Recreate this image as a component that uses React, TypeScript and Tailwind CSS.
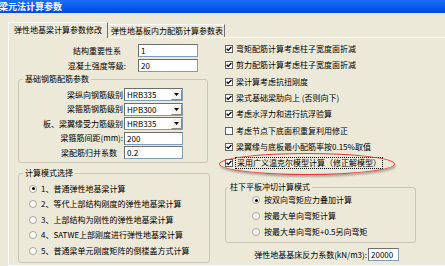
import React from 'react';

function TextBox({ value, className }: { value: string; className: string }) {
  return (
    <div className={`h-[13px] bg-white border border-[#7f9db9] border-t-[#6d6d6d] border-l-[#6d6d6d] pl-[2px] leading-[11px] ${className}`}>
      {value}
    </div>
  );
}

function Select({ value }: { value: string }) {
  return (
    <div className="h-[13px] w-[59px] bg-white border border-[#7f9db9] border-t-[#6d6d6d] border-l-[#6d6d6d] flex items-center">
      <span className="flex-1 pl-[2px] leading-[11px]">{value}</span>
      <span className="w-[11px] h-[11px] bg-[#f3f2ec] border border-t-white border-l-white border-r-[#8a8a8a] border-b-[#8a8a8a] flex items-center justify-center">
        <svg width="5" height="3" viewBox="0 0 5 3">
          <path d="M0 0H5L2.5 3Z" fill="#000" />
        </svg>
      </span>
    </div>
  );
}

function Check({ checked }: { checked: boolean }) {
  return (
    <span className="w-[8px] h-[8px] bg-white border border-[#5e5e5e] flex items-center justify-center shrink-0">
      {checked && (
        <svg width="6" height="6" viewBox="0 0 6 6">
          <path d="M0.6 2.8L2.2 4.4L5.4 1" stroke="#000" strokeWidth="1.3" fill="none" />
        </svg>
      )}
    </span>
  );
}

function Radio({ on }: { on: boolean }) {
  return (
    <span className="w-[8px] h-[8px] rounded-full bg-white border border-[#a5a39a] flex items-center justify-center shrink-0">
      {on && <span className="w-[3px] h-[3px] rounded-full bg-black" />}
    </span>
  );
}

const checks: [boolean, string][] = [
  [true, '弯矩配筋计算考虑柱子宽度面折减'],
  [true, '剪力配筋计算考虑柱子宽度面折减'],
  [true, '梁计算考虑抗扭刚度'],
  [true, '梁式基础梁肋向上 (否则向下)'],
  [true, '考虑水浮力和进行抗浮验算'],
  [false, '考虑节点下底面积重复利用修正'],
  [true, '梁翼缘与底板最小配筋率按0.15%取值'],
];

const modes = [
  '1、普通弹性地基梁计算',
  '2、等代上部结构刚度的弹性地基梁计算',
  '3、上部结构为刚性的弹性地基梁计算',
  '4、SATWE上部刚度进行弹性地基梁计算',
  '5、普通梁单元刚度矩阵的倒楼盖方式计算',
];

export default function App() {
  return (
    <div className="w-[445px] h-[266px] overflow-hidden bg-[#ECE9D8] relative text-[8px] text-black font-['Noto_Sans_CJK_SC','Liberation_Sans',sans-serif]">
      <div className="h-[13px] bg-linear-to-b from-[#1c6ff6] via-[#0a5cf0] to-[#004ad6] flex items-center">
        <span className="-ml-[1px] text-white font-bold text-[9px] leading-[13px]">梁元法计算参数</span>
      </div>

      <div className="mt-[9px] ml-[8px] flex items-end h-[15px]">
        <div className="relative z-10 -mb-[1px] h-[16px] pl-[5px] pr-[5px] bg-[#ECE9D8] border-t border-l border-white border-r border-r-[#6f6f6f] leading-[14px]">
          弹性地基梁计算参数修改
        </div>
        <div className="h-[13px] pl-[3px] pr-[1px] border-t border-white border-r border-r-[#6f6f6f] leading-[12px]">
          弹性地基板内力配筋计算参数表
        </div>
      </div>

      <div className="ml-[8px] h-[229px] border-t border-l border-b border-white flex">
        {/* left column */}
        <div className="w-[213px] pt-[6px] flex flex-col">
          <div className="flex items-center h-[13px]">
            <span className="w-[117px] text-right pr-[5px]">结构重要性系</span>
            <TextBox value="1" className="ml-[12px] w-[60px]" />
          </div>
          <div className="flex items-center h-[13px] mt-[2px]">
            <span className="w-[117px] text-right">混凝土强度等级:</span>
            <TextBox value="20" className="ml-[12px] w-[60px]" />
          </div>

          <fieldset className="ml-[9px] w-[190px] mt-[2px] border border-[#c9c6b6] rounded-[3px] pt-[4px] pb-[3px]">
            <legend className="ml-[4px] px-[2px] leading-[10px]">基础钢筋配筋参数</legend>
            <div className="flex flex-col gap-[1.5px]">
              <div className="flex items-center h-[13px]">
                <span className="w-[104px] text-right">梁纵向钢筋级别</span>
                <span className="ml-[1px]"><Select value="HRB335" /></span>
              </div>
              <div className="flex items-center h-[13px]">
                <span className="w-[104px] text-right">梁箍筋钢筋级别</span>
                <span className="ml-[1px]"><Select value="HPB300" /></span>
              </div>
              <div className="flex items-center h-[13px]">
                <span className="w-[104px] text-right">板、梁翼缘受力筋级别</span>
                <span className="ml-[1px]"><Select value="HRB335" /></span>
              </div>
              <div className="flex items-center h-[13px]">
                <span className="w-[104px] text-right">梁箍筋间距(mm):</span>
                <TextBox value="200" className="ml-[1px] w-[59px]" />
              </div>
              <div className="flex items-center h-[13px]">
                <span className="w-[104px] text-right pr-[6px]">梁配筋归并系数</span>
                <TextBox value="0.2" className="ml-[1px] w-[59px]" />
              </div>
            </div>
          </fieldset>

          <fieldset className="ml-[9px] w-[192px] mt-[5px] border border-[#c9c6b6] rounded-[3px] pt-[3px] pb-[3px] pl-[10px]">
            <legend className="-ml-[6px] px-[2px] leading-[10px]">计算模式选择</legend>
            {modes.map((m, i) => (
              <div key={m} className="flex items-center h-[15.5px]">
                <Radio on={i === 0} />
                <span className="ml-[4px]">{m}</span>
              </div>
            ))}
          </fieldset>
        </div>

        {/* right column */}
        <div className="flex-1 pt-[3px] flex flex-col">
          {checks.map(([c, t]) => (
            <div key={t} className="flex items-center h-[16.3px] pl-[3px]">
              <Check checked={c} />
              <span className="ml-[3px]">{t}</span>
            </div>
          ))}
          <div className="flex items-center h-[16.3px] pl-[3px]">
            <Check checked />
            <span className="ml-[2px] px-[1px] border border-dotted border-black leading-[10px]">采用广义温克尔模型计算（修正解模型）</span>
          </div>

          <fieldset className="ml-[3px] w-[191px] mt-[11px] border border-[#c9c6b6] rounded-[3px] pb-[2px]">
            <legend className="ml-[2px] px-[2px] leading-[10px]">柱下平板冲切计算模式</legend>
            <div className="pl-[26px]">
              {['按双向弯矩应力叠加计算', '按最大单向弯矩计算', '按最大单向弯矩+0.5另向弯矩'].map((t, i) => (
                <div key={t} className="flex items-center h-[16px]">
                  <Radio on={i === 0} />
                  <span className="ml-[4px]">{t}</span>
                </div>
              ))}
            </div>
          </fieldset>

          <div className="flex items-center h-[13px] mt-[5px]">
            <span className="w-[145px] text-right">弹性地基基床反力系数(kN/m3):</span>
            <TextBox value="20000" className="ml-[1px] w-[31px]" />
          </div>
        </div>
      </div>

      <div className="absolute left-[219px] top-[153px] w-[176px] h-[22px] rounded-[50%] border-[1.5px] border-[#e23b3b] shadow-[1px_2px_2px_rgba(0,0,0,0.25)]" />
    </div>
  );
}
